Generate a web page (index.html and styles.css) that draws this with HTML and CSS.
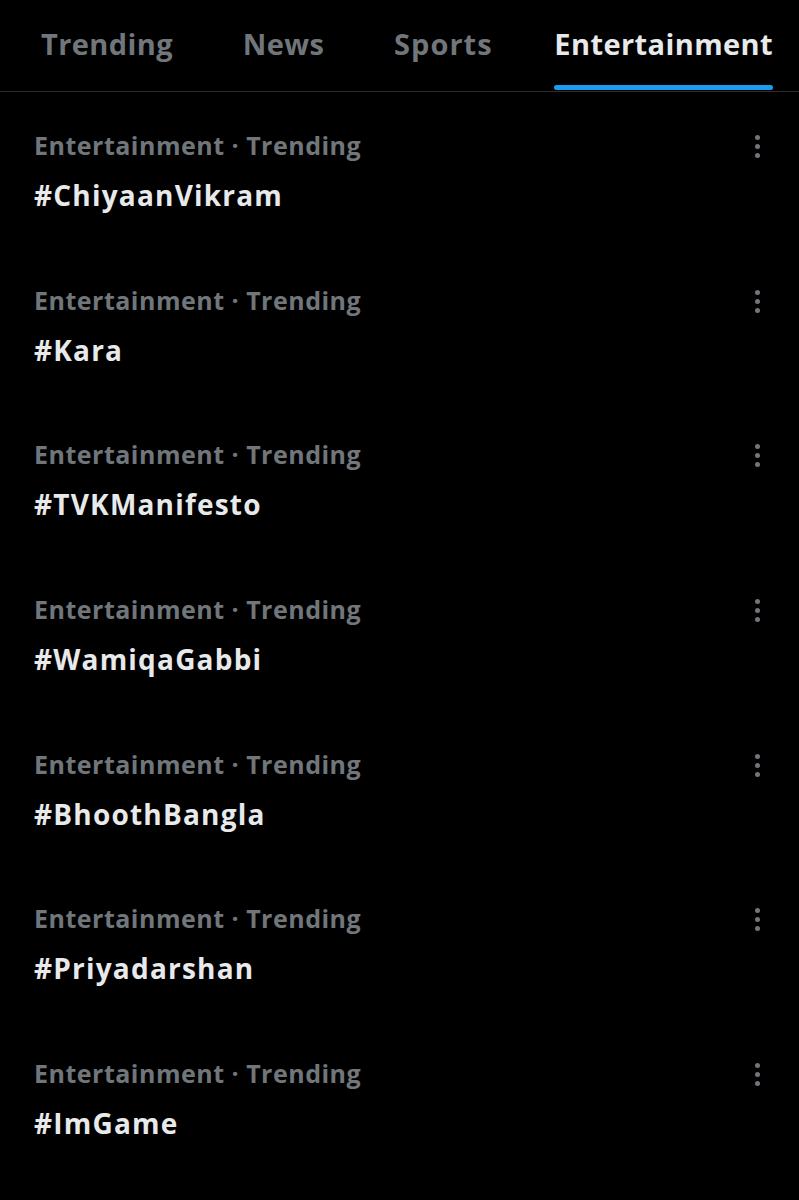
FILE: index.html
```html
<!DOCTYPE html>
<html lang="en">
<head>
  <meta charset="utf-8">
  <title>Explore</title>
  <link rel="stylesheet" href="styles.css">
</head>
<body>
  <div class="tabs">
    <div class="tab">Trending</div>
    <div class="tab">News</div>
    <div class="tab">Sports</div>
    <div class="tab active">Entertainment</div>
  </div>
  <div class="trends">
    <div class="trend">
      <div class="trend-text">
        <div class="trend-meta">Entertainment · Trending</div>
        <div class="trend-name">#ChiyaanVikram</div>
      </div>
      <div class="more"><span></span><span></span><span></span></div>
    </div>
    <div class="trend">
      <div class="trend-text">
        <div class="trend-meta">Entertainment · Trending</div>
        <div class="trend-name">#Kara</div>
      </div>
      <div class="more"><span></span><span></span><span></span></div>
    </div>
    <div class="trend">
      <div class="trend-text">
        <div class="trend-meta">Entertainment · Trending</div>
        <div class="trend-name">#TVKManifesto</div>
      </div>
      <div class="more"><span></span><span></span><span></span></div>
    </div>
    <div class="trend">
      <div class="trend-text">
        <div class="trend-meta">Entertainment · Trending</div>
        <div class="trend-name">#WamiqaGabbi</div>
      </div>
      <div class="more"><span></span><span></span><span></span></div>
    </div>
    <div class="trend">
      <div class="trend-text">
        <div class="trend-meta">Entertainment · Trending</div>
        <div class="trend-name">#BhoothBangla</div>
      </div>
      <div class="more"><span></span><span></span><span></span></div>
    </div>
    <div class="trend">
      <div class="trend-text">
        <div class="trend-meta">Entertainment · Trending</div>
        <div class="trend-name">#Priyadarshan</div>
      </div>
      <div class="more"><span></span><span></span><span></span></div>
    </div>
    <div class="trend">
      <div class="trend-text">
        <div class="trend-meta">Entertainment · Trending</div>
        <div class="trend-name">#ImGame</div>
      </div>
      <div class="more"><span></span><span></span><span></span></div>
    </div>
  </div>
</body>
</html>
```

FILE: styles.css
```css
body {
  margin: 0;
  background: #000;
  font-family: "Open Sans", "Noto Sans", sans-serif;
  color: #e7e9ea;
  height: 1200px;
  overflow: hidden;
}
.tabs {
  display: flex;
  justify-content: space-between;
  padding: 0 26px 0 41px;
  height: 91px;
  border-bottom: 1px solid #2a2d30;
}
.tab {
  position: relative;
  font-size: 29px;
  font-weight: 700;
  letter-spacing: 0.4px;
  color: #71767b;
  line-height: 88px;
}
.tab:nth-child(3) {
  letter-spacing: 1px;
  margin-right: -8px;
}
.tab.active {
  color: #e7e9ea;
}
.tab.active::after {
  content: "";
  position: absolute;
  left: 0;
  right: 0;
  bottom: 1px;
  height: 5px;
  border-radius: 3px;
  background: #1d9bf0;
}
.trend {
  display: flex;
  justify-content: space-between;
  height: 154.7px;
  padding: 0 34px;
  box-sizing: border-box;
}
.trend-text {
  padding-top: 30px;
}
.trend-meta {
  font-size: 25px;
  font-weight: 700;
  letter-spacing: 0.5px;
  color: #71767b;
  line-height: 46px;
}
.trend-name {
  font-size: 28px;
  font-weight: 700;
  letter-spacing: 1.2px;
  line-height: 54px;
}
.more {
  display: flex;
  flex-direction: column;
  gap: 4px;
  padding: 43px 5px 0 0;
}
.more span {
  width: 5px;
  height: 5px;
  border-radius: 50%;
  background: #71767b;
}
```
